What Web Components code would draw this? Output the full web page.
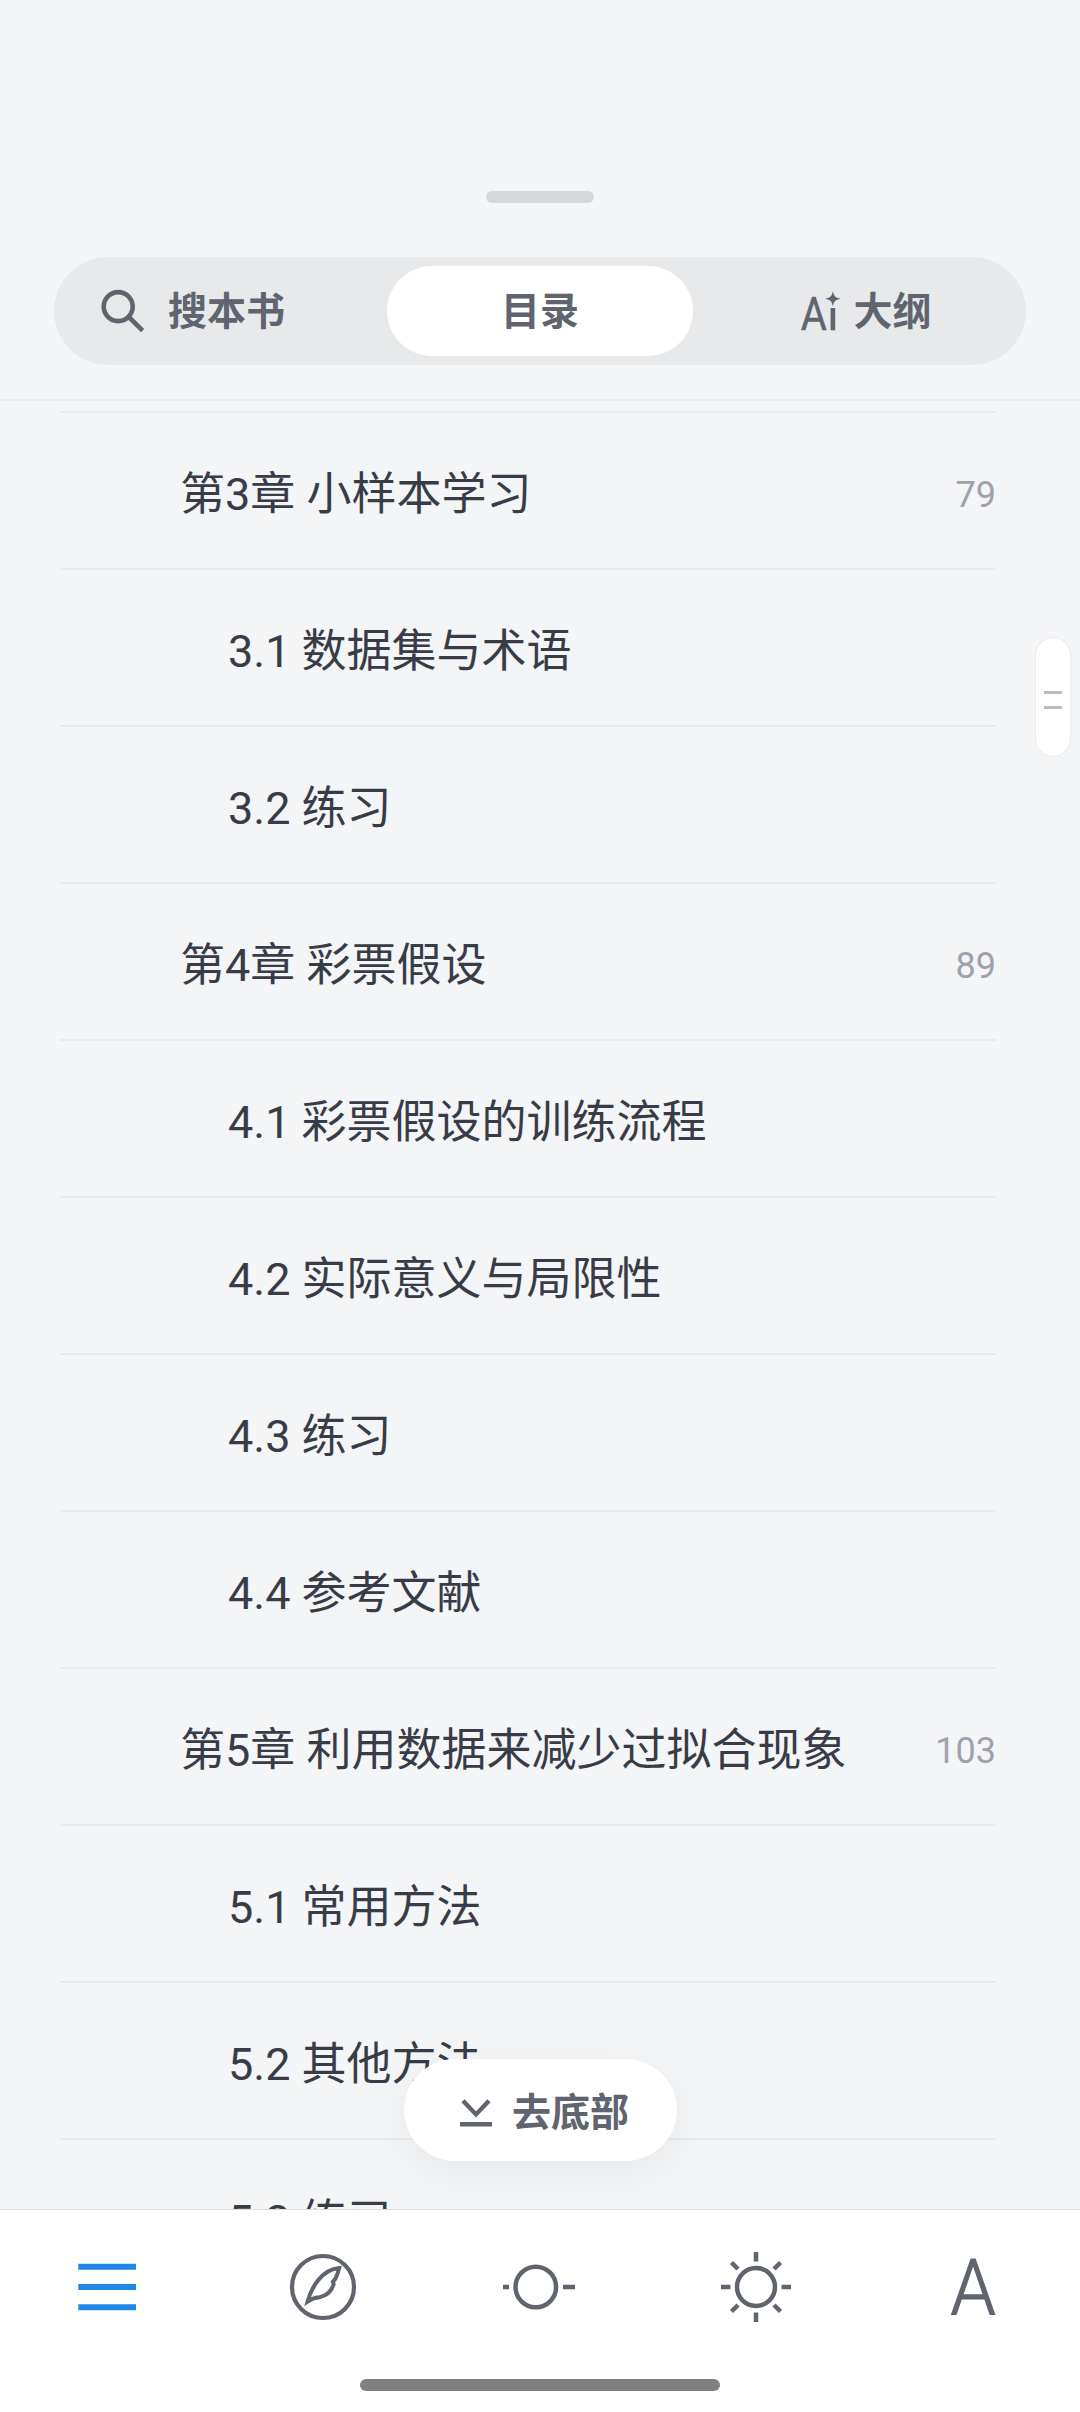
<!DOCTYPE html>
<html lang="zh-CN">
<head>
<meta charset="UTF-8">
<title>目录</title>
<style>
    html, body {
        margin: 0;
        height: 100%;
    }

    body {
        background: #f3f5f7;
        font-family: Roboto, "Noto Sans CJK SC", sans-serif;
        color: #393c46;
        overflow: hidden;
    }
</style>
</head>
<body>
<reader-catalog>
    <segment-bar slot="header">
        <segment-item align="start">
            <svg slot="icon" width="44" height="44" viewBox="0 0 44 44" fill="none" stroke="#60646e" stroke-width="4.6">
                <circle cx="17.2" cy="17.6" r="14.5"/>
                <path d="M27.8 28 41.6 41.6"/>
            </svg>
            搜本书
        </segment-item>
        <segment-item active>目录</segment-item>
        <segment-item compact>
            <svg slot="icon" width="40" height="60" viewBox="0 -10 40 60" fill="#60646e" overflow="visible">
                <text transform="translate(-0.3 39.3) scale(0.85 1)" font-size="47" font-weight="400" stroke="#60646e" stroke-width="0.5" font-family="Roboto">A</text>
                <rect x="29.6" y="17" width="4.6" height="22.3"/>
                <path d="M31.9 0C32.9 5.200 34.400 6.700 39.600 7.700 34.400 8.700 32.900 10.200 31.900 15.400 30.900 10.200 29.400 8.700 24.200 7.700 29.400 6.700 30.900 5.200 31.900 0Z"/>
            </svg>
            大纲
        </segment-item>
    </segment-bar>

    <chapter-row page="79">第3章 小样本学习</chapter-row>
    <chapter-row level="2">3.1 数据集与术语</chapter-row>
    <chapter-row level="2">3.2 练习</chapter-row>
    <chapter-row page="89">第4章 彩票假设</chapter-row>
    <chapter-row level="2">4.1 彩票假设的训练流程</chapter-row>
    <chapter-row level="2">4.2 实际意义与局限性</chapter-row>
    <chapter-row level="2">4.3 练习</chapter-row>
    <chapter-row level="2">4.4 参考文献</chapter-row>
    <chapter-row page="103">第5章 利用数据来减少过拟合现象</chapter-row>
    <chapter-row level="2">5.1 常用方法</chapter-row>
    <chapter-row level="2">5.2 其他方法</chapter-row>
    <chapter-row level="2">5.3 练习</chapter-row>

    <scroll-thumb slot="overlay"></scroll-thumb>
    <jump-button slot="overlay">去底部</jump-button>
    <tool-bar slot="footer"></tool-bar>
</reader-catalog>

<script>
class ReaderCatalog extends HTMLElement {
    constructor() {
        super();
        this.attachShadow({ mode: 'open' });
    }

    connectedCallback() {
        this.shadowRoot.innerHTML = `
            <style>
                :host {
                    display: flex;
                    flex-direction: column;
                    position: relative;
                    height: 2412px;
                    width: 1080px;
                    overflow: hidden;
                }

                header {
                    flex: none;
                    box-sizing: border-box;
                    height: 401px;
                    padding: 191px 54px 0;
                    border-bottom: 2px solid #e8eaec;
                }

                .grip {
                    width: 108px;
                    height: 12px;
                    margin: 0 auto 54px;
                    border-radius: 6px;
                    background: #d5d7d9;
                }

                main {
                    flex: 1;
                    min-height: 0;
                    overflow: hidden;
                    padding: 10px 84px 0 60px;
                }
            </style>

            <header>
                <div class="grip"></div>
                <slot name="header"></slot>
            </header>
            <main><slot></slot></main>
            <slot name="footer"></slot>
            <slot name="overlay"></slot>
        `;
    }
}

class SegmentBar extends HTMLElement {
    constructor() {
        super();
        this.attachShadow({ mode: 'open' });
    }

    connectedCallback() {
        this.shadowRoot.innerHTML = `
            <style>
                :host {
                    display: grid;
                    grid-template-columns: repeat(3, 1fr);
                    gap: 18px;
                    box-sizing: border-box;
                    height: 108px;
                    padding: 9px;
                    border-radius: 54px;
                    background: #e7e9eb;
                }
            </style>
            <slot></slot>
        `;
    }
}

class SegmentItem extends HTMLElement {
    constructor() {
        super();
        this.attachShadow({ mode: 'open' });
    }

    connectedCallback() {
        this.shadowRoot.innerHTML = `
            <style>
                :host {
                    display: flex;
                    align-items: center;
                    justify-content: center;
                    gap: 23px;
                    border-radius: 45px;
                    color: #60646e;
                    font-size: 39px;
                    font-weight: 700;
                    line-height: 58px;
                    white-space: nowrap;
                }

                :host([active]) {
                    background: #fff;
                }

                :host([align="start"]) {
                    justify-content: flex-start;
                    box-sizing: border-box;
                    padding-left: 38px;
                }

                :host([compact]) {
                    gap: 12px;
                    padding-left: 5px;
                }

                span {
                    padding-top: 2px;
                }

                ::slotted(svg) {
                    display: block;
                    flex: none;
                }
            </style>
            <slot name="icon"></slot>
            <span><slot></slot></span>
        `;
    }
}

class ChapterRow extends HTMLElement {
    constructor() {
        super();
        this.attachShadow({ mode: 'open' });
    }

    connectedCallback() {
        const page = this.getAttribute('page') || '';
        this.shadowRoot.innerHTML = `
            <style>
                :host {
                    display: flex;
                    align-items: center;
                    justify-content: space-between;
                    box-sizing: border-box;
                    height: 157px;
                    padding-top: 8px;
                    padding-left: 120px;
                    border-top: 2px solid #e8eaec;
                    font-size: 45px;
                    line-height: 66px;
                    white-space: nowrap;
                }

                :host([level="2"]) {
                    padding-left: 168px;
                }

                .page {
                    color: #9fa1ab;
                    font-size: 36px;
                }
            </style>
            <span><slot></slot></span>
            ${page ? `<span class="page">${page}</span>` : ''}
        `;
    }
}

class ScrollThumb extends HTMLElement {
    constructor() {
        super();
        this.attachShadow({ mode: 'open' });
    }

    connectedCallback() {
        this.shadowRoot.innerHTML = `
            <style>
                :host {
                    position: absolute;
                    top: 638px;
                    right: 10px;
                    display: flex;
                    flex-direction: column;
                    align-items: center;
                    justify-content: center;
                    gap: 12px;
                    box-sizing: border-box;
                    width: 34px;
                    height: 118px;
                    padding-top: 6px;
                    border-radius: 17px;
                    background: #fff;
                    box-shadow: 0 0 2px rgba(0, 0, 0, 0.12);
                }

                i {
                    width: 18px;
                    height: 3px;
                    background: #bbb;
                }
            </style>
            <i></i>
            <i></i>
        `;
    }
}

class JumpButton extends HTMLElement {
    constructor() {
        super();
        this.attachShadow({ mode: 'open' });
    }

    connectedCallback() {
        this.shadowRoot.innerHTML = `
            <style>
                :host {
                    position: absolute;
                    left: 404px;
                    top: 2059px;
                    display: flex;
                    align-items: center;
                    justify-content: center;
                    gap: 20px;
                    box-sizing: border-box;
                    width: 273px;
                    height: 102px;
                    padding: 5px 0 0 8px;
                    border-radius: 51px;
                    background: #fff;
                    box-shadow: 0 12px 48px rgba(0, 0, 0, 0.06);
                    color: #60646e;
                    font-size: 39px;
                    font-weight: 700;
                    line-height: 58px;
                    /* keeps the shadow off the tool bar */
                    clip-path: inset(-80px -80px -48px -80px);
                }
            </style>
            <svg width="32" height="28" viewBox="0 0 32 28" fill="none" stroke="#60646e" stroke-width="4.4">
                <path d="M3 1.8 16 15.4 29 1.8M0 25.3H32"/>
            </svg>
            <span><slot></slot></span>
        `;
    }
}

class ToolBar extends HTMLElement {
    constructor() {
        super();
        this.attachShadow({ mode: 'open' });
    }

    connectedCallback() {
        this.shadowRoot.innerHTML = `
            <style>
                :host {
                    display: block;
                    flex: none;
                    box-sizing: border-box;
                    height: 203px;
                    border-top: 1px solid #dcdee0;
                    background: #fff;
                }

                nav {
                    display: flex;
                    height: 154px;
                    align-items: center;
                }

                .item {
                    flex: 1;
                    display: flex;
                    justify-content: center;
                }

                svg {
                    display: block;
                    fill: none;
                    stroke: #60646e;
                    stroke-width: 4.5;
                    overflow: visible;
                }

                .home {
                    width: 360px;
                    height: 12px;
                    margin: 15px auto 0;
                    border-radius: 6px;
                    background: #808080;
                }
            </style>

            <nav>
                <div class="item">
                    <svg width="80" height="80" viewBox="-40 -40 80 80" style="stroke: #2286e6; stroke-width: 6">
                        <path d="M-29.7-20.3H28M-29.7 0H28M-29.7 20.3H28"/>
                    </svg>
                </div>
                <div class="item">
                    <svg width="80" height="80" viewBox="-40 -40 80 80">
                        <circle cx="-1" cy="0" r="31" stroke-width="4.2"/>
                        <path stroke-width="4" d="M-16.4 14.5C-12.5 0-2-17.5 15.2-19 14.2-15 13-11.5 11.3-8.2L8.9-5.4 9.7-3C8 3 3 8.5-4.5 10.3-9.5 10.8-12.8 12-16.4 14.5Z"/>
                    </svg>
                </div>
                <div class="item">
                    <svg width="80" height="80" viewBox="-40 -40 80 80">
                        <circle cx="-4.2" cy="0" r="20.3"/>
                        <path d="M-37 0H-31M23 0H35"/>
                    </svg>
                </div>
                <div class="item">
                    <svg width="80" height="80" viewBox="-40 -40 80 80">
                        <circle cx="0" cy="0" r="19"/>
                        <path d="M0-35V-25.5M0 25.5V35M-35 0H-25.5M25.5 0H35M-24.5-24.5-18-18M18 18 24.5 24.5M-24.5 24.5-18 18M18-18 24.5-24.5"/>
                    </svg>
                </div>
                <div class="item">
                    <svg width="80" height="120" viewBox="-40 -60 80 120">
                        <text transform="translate(1.2 28.4) scale(0.94 1)" text-anchor="middle" font-family="Roboto" font-weight="300" font-size="77" style="fill: #60646e; stroke: #60646e; stroke-width: 1.2">A</text>
                    </svg>
                </div>
            </nav>
            <div class="home"></div>
        `;
    }
}

customElements.define('reader-catalog', ReaderCatalog);
customElements.define('segment-bar', SegmentBar);
customElements.define('segment-item', SegmentItem);
customElements.define('chapter-row', ChapterRow);
customElements.define('scroll-thumb', ScrollThumb);
customElements.define('jump-button', JumpButton);
customElements.define('tool-bar', ToolBar);
</script>
</body>
</html>
